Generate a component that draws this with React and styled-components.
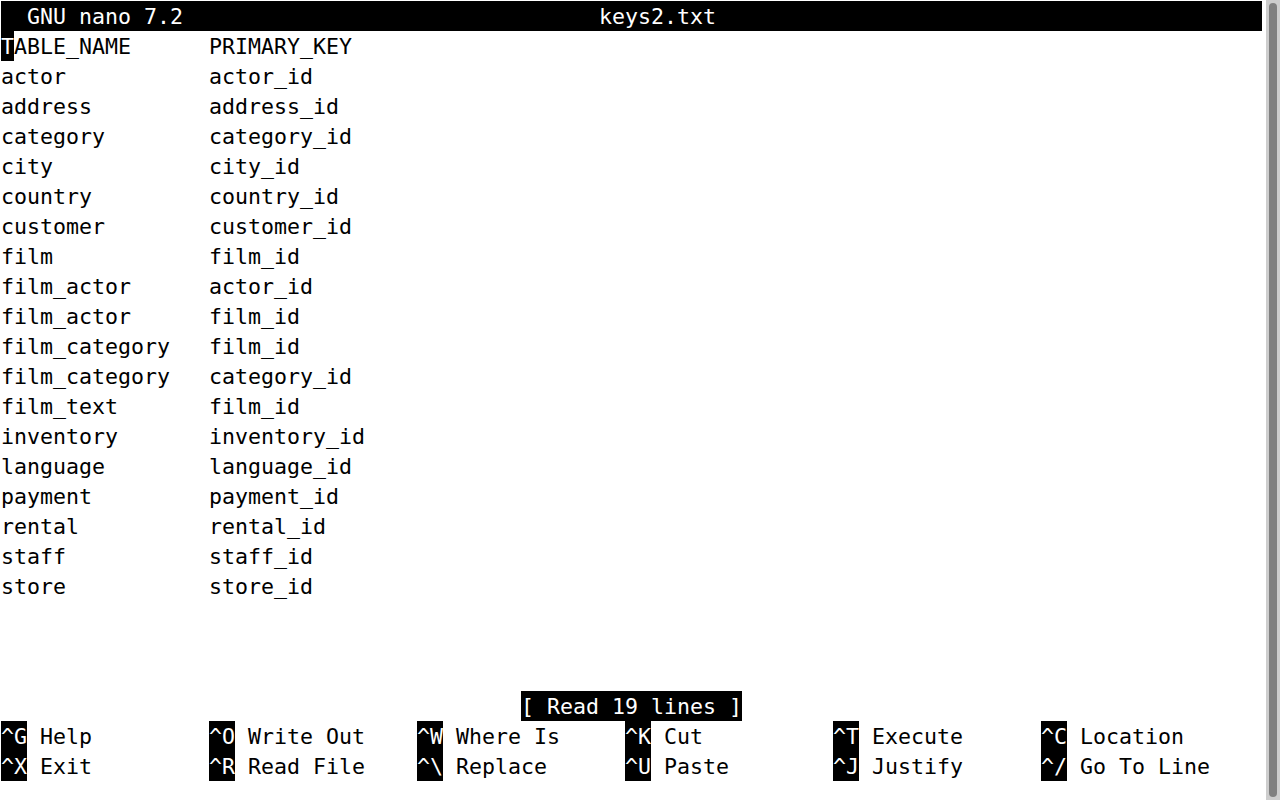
import React from 'react';
import styled, { createGlobalStyle } from 'styled-components';

const GlobalStyle = createGlobalStyle`
  html, body {
    margin: 0;
    padding: 0;
    background: #ffffff;
  }
`;

const Window = styled.div`
  display: flex;
  width: 1280px;
  height: 800px;
  overflow: hidden;
  background: #ffffff;
`;

const Screen = styled.div`
  flex: 1;
  padding: 1px 0 0 1px;
  font-family: "DejaVu Sans Mono", "Liberation Mono", monospace;
  font-size: 21.6px;
  color: #000000;
`;

const Line = styled.div`
  width: 1261px;
  height: 30px;
  line-height: 32px;
  white-space: pre;
  background: ${(p) => (p.$inverse ? '#000000' : 'transparent')};
  color: ${(p) => (p.$inverse ? '#ffffff' : '#000000')};
`;

const Inverse = styled.span`
  display: inline-block;
  height: 30px;
  line-height: 32px;
  vertical-align: top;
  background: #000000;
  color: #ffffff;
`;

const ShortcutRow = styled.div`
  display: grid;
  grid-template-columns: repeat(6, 208px);
  height: 30px;
  line-height: 32px;
  white-space: pre;
`;

const Cell = styled.span`
  height: 30px;
`;

const ScrollTrack = styled.div`
  width: 14px;
  margin-left: 2px;
  height: 800px;
  background: #cdcdcd;
  display: flex;
  justify-content: center;
  padding: 3px 0;
  box-sizing: border-box;
`;

const ScrollThumb = styled.div`
  width: 8px;
  height: 100%;
  background: #808080;
  border-radius: 4px;
`;

const rows = [
  ['actor', 'actor_id'],
  ['address', 'address_id'],
  ['category', 'category_id'],
  ['city', 'city_id'],
  ['country', 'country_id'],
  ['customer', 'customer_id'],
  ['film', 'film_id'],
  ['film_actor', 'actor_id'],
  ['film_actor', 'film_id'],
  ['film_category', 'film_id'],
  ['film_category', 'category_id'],
  ['film_text', 'film_id'],
  ['inventory', 'inventory_id'],
  ['language', 'language_id'],
  ['payment', 'payment_id'],
  ['rental', 'rental_id'],
  ['staff', 'staff_id'],
  ['store', 'store_id'],
];

const shortcuts = [
  [['^G', 'Help'], ['^O', 'Write Out'], ['^W', 'Where Is'], ['^K', 'Cut'], ['^T', 'Execute'], ['^C', 'Location']],
  [['^X', 'Exit'], ['^R', 'Read File'], ['^\\', 'Replace'], ['^U', 'Paste'], ['^J', 'Justify'], ['^/', 'Go To Line']],
];

const pad = (s, n) => s + ' '.repeat(Math.max(0, n - s.length));

const App = () => {
  const title = pad('  GNU nano 7.2', 46) + pad('keys2.txt', 51);
  return (
    <>
      <GlobalStyle />
      <Window>
        <Screen>
          <Line $inverse>{title}</Line>
          <Line>
            <Inverse>T</Inverse>
            {pad('ABLE_NAME', 15)}PRIMARY_KEY
          </Line>
          {rows.map(([name, key], i) => (
            <Line key={i}>{pad(name, 16) + key}</Line>
          ))}
          <Line />
          <Line />
          <Line />
          <Line>
            {' '.repeat(40)}
            <Inverse>[ Read 19 lines ]</Inverse>
          </Line>
          {shortcuts.map((row, r) => (
            <ShortcutRow key={r}>
              {row.map(([k, label]) => (
                <Cell key={k}>
                  <Inverse>{k}</Inverse> {label}
                </Cell>
              ))}
            </ShortcutRow>
          ))}
        </Screen>
        <ScrollTrack>
          <ScrollThumb />
        </ScrollTrack>
      </Window>
    </>
  );
};

export default App;
